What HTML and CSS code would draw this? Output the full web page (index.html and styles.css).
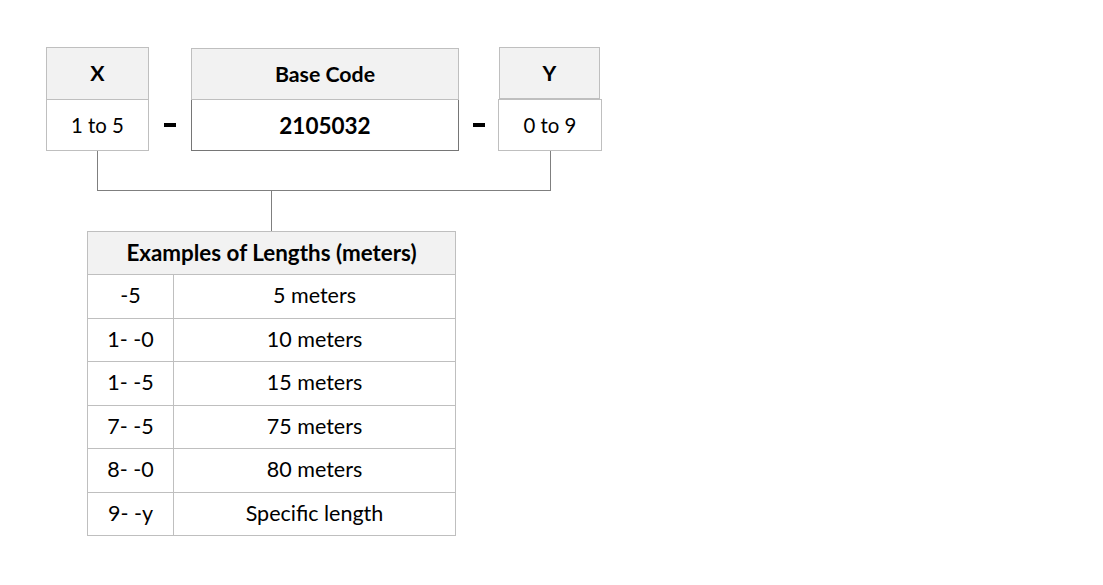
FILE: index.html
```html
<!DOCTYPE html>
<html>
<head>
<meta charset="utf-8">
<link rel="stylesheet" href="styles.css">
</head>
<body>
<div class="page">
  <div class="code-row">
    <div class="box box-x">
      <div class="box-head">X</div>
      <div class="box-body">1 to 5</div>
    </div>
    <div class="dash dash-1"><span></span></div>
    <div class="box box-base">
      <div class="box-head">Base Code</div>
      <div class="box-body">2105032</div>
    </div>
    <div class="dash dash-2"><span></span></div>
    <div class="box box-y">
      <div class="box-head">Y</div>
      <div class="box-body">0 to 9</div>
    </div>
  </div>
  <div class="bracket"></div>
  <div class="stem"></div>
  <table class="lengths">
    <thead>
      <tr><th colspan="2">Examples of Lengths (meters)</th></tr>
    </thead>
    <tbody>
      <tr><td class="code">-5</td><td>5 meters</td></tr>
      <tr><td class="code">1- -0</td><td>10 meters</td></tr>
      <tr><td class="code">1- -5</td><td>15 meters</td></tr>
      <tr><td class="code">7- -5</td><td>75 meters</td></tr>
      <tr><td class="code">8- -0</td><td>80 meters</td></tr>
      <tr><td class="code">9- -y</td><td>Specific length</td></tr>
    </tbody>
  </table>
</div>
</body>
</html>
```

FILE: styles.css
```css
* { box-sizing: border-box; }
html, body { margin: 0; padding: 0; background: #ffffff; }
body {
  font-family: Lato, "Open Sans", "Liberation Sans", sans-serif;
  color: #000;
  font-size: 20px;
}
.page {
  padding: 47px 0 0 46px;
  width: 1103px;
  height: 585px;
}
.code-row {
  display: flex;
  align-items: flex-start;
  height: 103px;
}
.box { display: flex; flex-direction: column; }
.box-head {
  background: #f2f2f2;
  border: 1px solid #bfbfbf;
  font-weight: bold;
  font-size: 21.3px;
  display: flex;
  align-items: center;
  justify-content: center;
  padding-bottom: 1px;
}
.box-body {
  background: #fff;
  border: 1px solid #bfbfbf;
  border-top: none;
  font-size: 20.4px;
  display: flex;
  align-items: center;
  justify-content: center;
}
.box-x { width: 103px; }
.box-x .box-head { height: 53px; }
.box-x .box-body { height: 51px; }

.box-base { width: 268px; margin-top: 1px; }
.box-base .box-head { height: 52px; }
.box-base .box-body {
  height: 51px;
  border: 1px solid #767676;
  border-top: none;
  font-weight: bold;
  font-size: 22.5px;
}

.box-y { width: 104px; }
.box-y .box-head { height: 52px; width: 101px; margin-left: 1px; }
.box-y .box-body { height: 52px; border-top: 1px solid #bfbfbf; }

.dash {
  display: flex;
  align-items: center;
  justify-content: center;
  height: 103px;
  padding-top: 52px;
}
.dash span {
  display: block;
  width: 12px;
  height: 4px;
  background: #000;
}
.dash-1 { width: 42px; }
.dash-2 { width: 39px; }

.bracket {
  margin-left: 51px;
  width: 454px;
  height: 41px;
  border: 1px solid #7f7f7f;
  border-top: none;
}
.stem {
  margin-left: 225px;
  width: 1px;
  height: 40px;
  background: #7f7f7f;
}
.lengths {
  margin-left: 41px;
  border-collapse: collapse;
  width: 369px;
}
.lengths th, .lengths td {
  border: 1px solid #bfbfbf;
  text-align: center;
  padding: 0 0 2px 0;
  font-size: 21.5px;
}
.lengths th {
  background: #f2f2f2;
  height: 43px;
  font-weight: bold;
  font-size: 22.4px;
}
.lengths td { height: 43.5px; }
.lengths td.code { width: 86px; }
```
